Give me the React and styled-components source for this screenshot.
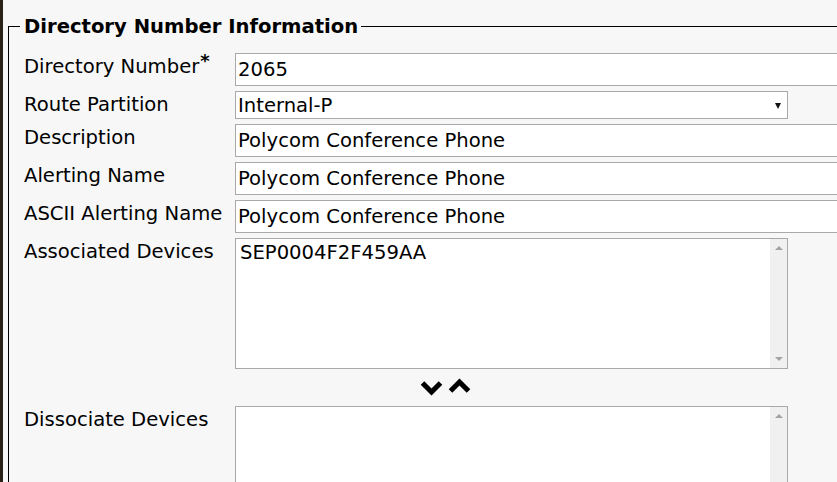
import React from 'react'
import styled, { createGlobalStyle } from 'styled-components'

const GlobalStyle = createGlobalStyle`
    html, body {
        margin: 0;
        padding: 0;
        height: 100%;
        overflow: hidden;
        background: linear-gradient(90deg, #2a2119 0%, #3b2c1e 100%);
    }
`

const Page = styled.div`
    margin-left: 3px;
    height: 482px;
    background: #f7f7f7;
    overflow: hidden;
    padding-top: 15px;
    box-sizing: border-box;
    font-family: "DejaVu Sans", Verdana, sans-serif;
    color: #000;
`

const Fieldset = styled.fieldset`
    margin: 0 0 0 5px;
    padding: 15px 0 0 15px;
    border: 1px solid #000;
    border-right: none;
    border-bottom: none;
    min-width: 0;
`

const Legend = styled.legend`
    margin-left: -4px;
    padding: 1px 3px 0 4px;
    font-size: 19.6px;
    font-weight: bold;
    line-height: 22px;
`

const Row = styled.div`
    display: grid;
    grid-template-columns: 211px 1fr;
    align-items: start;
    margin-bottom: 5px;
`

const Label = styled.div`
    font-size: 19.6px;
    line-height: 22px;
    padding-top: 3px;
    white-space: nowrap;
`

const Req = styled.sup`
    font-size: 18px;
    font-weight: bold;
    line-height: 0;
    vertical-align: 6px;
    margin-left: 1px;
`

const TextBox = styled.div`
    box-sizing: border-box;
    width: ${p => p.$w || 700}px;
    height: ${p => p.$h || 33}px;
    border: 1px solid #a9a9a9;
    background: #fff;
    padding: 1px 3px 0 2px;
    display: flex;
    align-items: center;
    font-size: 19.6px;
    line-height: 22px;
    white-space: nowrap;
`

const Select = styled(TextBox)`
    justify-content: space-between;
    padding-right: 6px;
`

const Caret = styled.span`
    width: 0;
    height: 0;
    border-left: 3px solid transparent;
    border-right: 3px solid transparent;
    border-top: 6px solid #111;
`

const ListBox = styled.div`
    box-sizing: border-box;
    width: 553px;
    height: 131px;
    border: 1px solid #a9a9a9;
    background: #fff;
    display: flex;
`

const ListText = styled.div`
    flex: 1;
    padding: 3px 4px;
    font-size: 19.6px;
    line-height: 22px;
`

const Track = styled.div`
    width: 17px;
    background: #f0f0f0;
    display: flex;
    flex-direction: column;
    justify-content: space-between;
    align-items: center;
    padding: 7px 0;
`

const TrackArrow = styled.span`
    width: 0;
    height: 0;
    border-left: 4px solid transparent;
    border-right: 4px solid transparent;
    ${p => p.$up ? 'border-bottom: 4px solid #a3a3a3;' : 'border-top: 4px solid #a3a3a3;'}
`

const MoveBar = styled.div`
    display: flex;
    gap: 5px;
    align-items: center;
    height: 37px;
    margin-top: -5px;
    padding-left: 396px;
`

const Chevron = ({ up }) => (
    <svg width="23" height="16" viewBox="0 0 23 16" style={{ marginTop: up ? -3 : 0 }}>
        <polyline
            points={up ? '2.5,13 11.5,4 20.5,13' : '2.5,3 11.5,12 20.5,3'}
            fill="none"
            stroke="#000"
            strokeWidth="5"
            strokeLinejoin="miter"
        />
    </svg>
)

const Scroll = () => (
    <Track>
        <TrackArrow $up />
        <TrackArrow />
    </Track>
)

export default function App() {
    return (
        <>
            <GlobalStyle />
            <Page>
                <Fieldset>
                    <Legend>Directory Number Information</Legend>
                    <Row>
                        <Label>Directory Number<Req>*</Req></Label>
                        <TextBox>2065</TextBox>
                    </Row>
                    <Row>
                        <Label>Route Partition</Label>
                        <Select $w={553} $h={28}>Internal-P<Caret /></Select>
                    </Row>
                    <Row>
                        <Label>Description</Label>
                        <TextBox>Polycom Conference Phone</TextBox>
                    </Row>
                    <Row>
                        <Label>Alerting Name</Label>
                        <TextBox>Polycom Conference Phone</TextBox>
                    </Row>
                    <Row>
                        <Label>ASCII Alerting Name</Label>
                        <TextBox>Polycom Conference Phone</TextBox>
                    </Row>
                    <Row>
                        <Label>Associated Devices</Label>
                        <ListBox>
                            <ListText>SEP0004F2F459AA</ListText>
                            <Scroll />
                        </ListBox>
                    </Row>
                    <MoveBar>
                        <Chevron />
                        <Chevron up />
                    </MoveBar>
                    <Row>
                        <Label>Dissociate Devices</Label>
                        <ListBox>
                            <ListText />
                            <Scroll />
                        </ListBox>
                    </Row>
                </Fieldset>
            </Page>
        </>
    )
}
